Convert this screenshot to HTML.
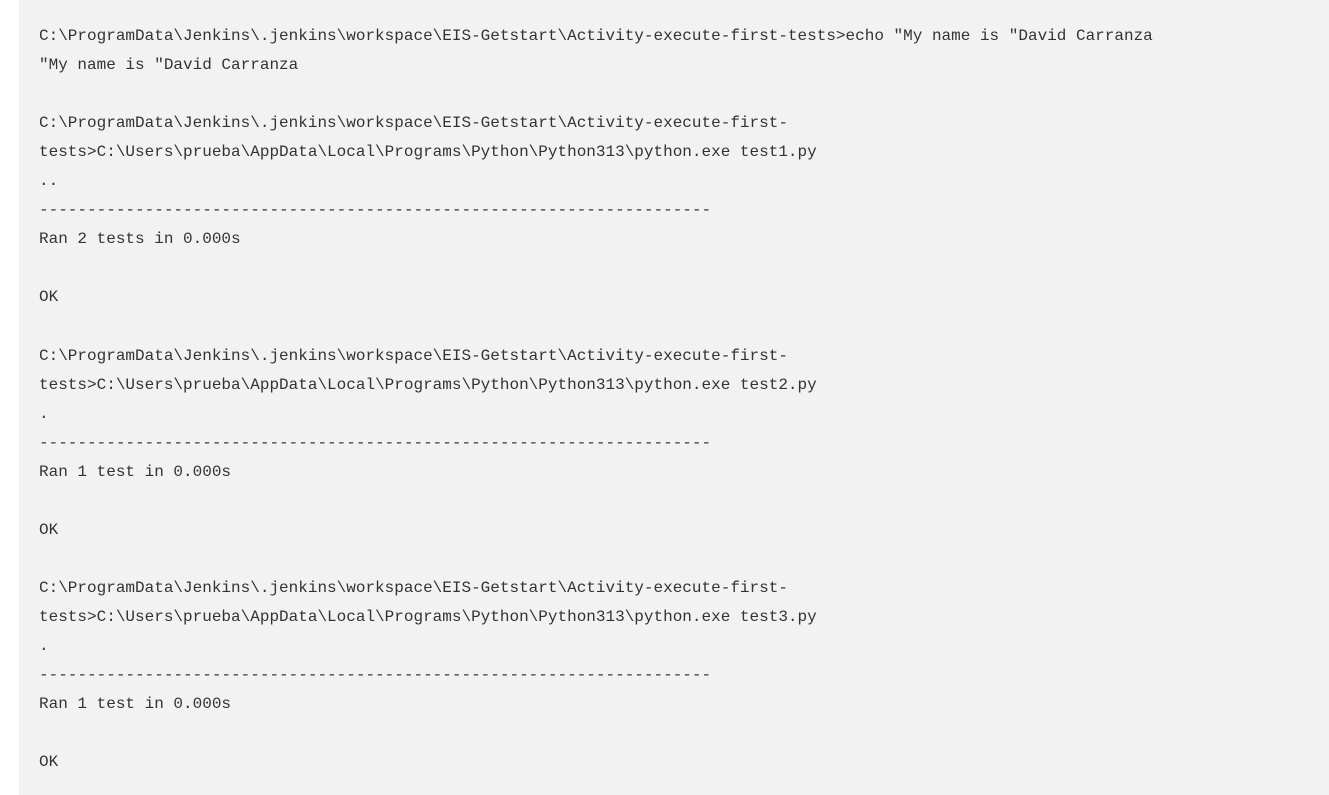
<!DOCTYPE html>
<html><head><meta charset="utf-8"><style>
html,body{margin:0;padding:0;background:#fff;width:1329px;height:795px;overflow:hidden}
pre{position:absolute;left:19px;top:0;width:1310px;height:795px;margin:0;background:#f2f2f2;box-sizing:border-box;padding:22px 20px;font-family:"Liberation Mono",monospace;font-size:16px;line-height:29.05px;color:#333;white-space:pre}
</style></head><body><pre>C:\ProgramData\Jenkins\.jenkins\workspace\EIS-Getstart\Activity-execute-first-tests&gt;echo "My name is "David Carranza
"My name is "David Carranza

C:\ProgramData\Jenkins\.jenkins\workspace\EIS-Getstart\Activity-execute-first-
tests&gt;C:\Users\prueba\AppData\Local\Programs\Python\Python313\python.exe test1.py
..
----------------------------------------------------------------------
Ran 2 tests in 0.000s

OK

C:\ProgramData\Jenkins\.jenkins\workspace\EIS-Getstart\Activity-execute-first-
tests&gt;C:\Users\prueba\AppData\Local\Programs\Python\Python313\python.exe test2.py
.
----------------------------------------------------------------------
Ran 1 test in 0.000s

OK

C:\ProgramData\Jenkins\.jenkins\workspace\EIS-Getstart\Activity-execute-first-
tests&gt;C:\Users\prueba\AppData\Local\Programs\Python\Python313\python.exe test3.py
.
----------------------------------------------------------------------
Ran 1 test in 0.000s

OK</pre></body></html>
